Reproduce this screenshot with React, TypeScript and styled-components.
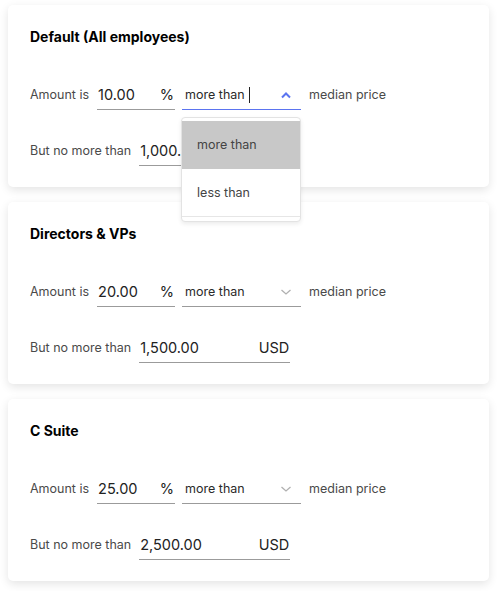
import React from 'react';
import styled, { createGlobalStyle } from 'styled-components';

const GlobalStyle = createGlobalStyle`
    body {
        margin : 0;
        background : #FFFFFF;
        font-family : Inter, "Noto Sans", sans-serif;
    }
`

const Page = styled.div`
    display : flex;
    flex-direction : column;
    gap : 15px;
    padding : 5px 9px 10px 8px;
`

const Card = styled.div`
    position : relative;
    background : #FFFFFF;
    border-radius : 5px;
    box-shadow : 0 3px 10px rgba(0, 0, 0, 0.11);
    padding : 23px 22px 21px 22px;
    display : flex;
    flex-direction : column;
`

const Title = styled.div`
    font-size : 14px;
    font-weight : 700;
    line-height : 17px;
    color : #000000;
    margin-bottom : 37px;
`

const Row = styled.div<{ $gap?: number }>`
    display : flex;
    align-items : flex-end;
    height : 28px;
    margin-bottom : ${(p) => p.$gap ?? 0}px;
`

const Label = styled.span<{ $space: number }>`
    font-size : 12.5px;
    color : #4a4a4a;
    margin-right : ${(p) => p.$space}px;
    height : 20px;
    margin-bottom : 6px;
    display : flex;
    align-items : center;
`

const Field = styled.div<{ $width: number; $active?: boolean }>`
    position : relative;
    width : ${(p) => p.$width}px;
    height : 28px;
    box-sizing : border-box;
    border-bottom : 1px solid ${(p) => (p.$active ? '#5b74f0' : '#9b9b9b')};
    display : flex;
    align-items : center;
    justify-content : space-between;
    padding : 0 1px 2px 1px;
    margin-right : 7px;
`

const Value = styled.span`
    font-size : 14.5px;
    color : #222222;
    white-space : nowrap;
`

const Unit = styled.span`
    font-size : 14.5px;
    color : #222222;
`

const SelectText = styled.span`
    font-size : 12.5px;
    color : #2a2a2a;
    padding-left : 2px;
    display : flex;
    align-items : center;
`

const Caret = styled.span`
    display : inline-block;
    width : 1px;
    height : 16px;
    background : #222222;
    margin-left : 4px;
`

const Chevron = styled.svg`
    margin-right : 8px;
`

const Trailing = styled.span`
    font-size : 12.5px;
    color : #4a4a4a;
    margin-left : 1px;
    height : 20px;
    margin-bottom : 6px;
    display : flex;
    align-items : center;
`

const Menu = styled.div`
    position : absolute;
    top : 35px;
    left : -1px;
    width : 120px;
    box-sizing : border-box;
    background : #FFFFFF;
    border : 1px solid #e3e3e3;
    border-radius : 4px;
    box-shadow : 0 2px 4px rgba(0, 0, 0, 0.08);
    padding : 3px 0 4px 0;
    z-index : 10;
`

const MenuItem = styled.div<{ $selected?: boolean }>`
    height : 48px;
    box-sizing : border-box;
    display : flex;
    align-items : center;
    padding-left : 15px;
    font-size : 12.5px;
    color : #444444;
    background : ${(p) => (p.$selected ? '#c8c8c8' : '#FFFFFF')};
    border-bottom : 1px solid ${(p) => (p.$selected ? '#c8c8c8' : '#e6e6e6')};
`

const tiers = [
    { name: 'Default (All employees)', pct: '10.00', cap: '1,000.00', open: true },
    { name: 'Directors & VPs', pct: '20.00', cap: '1,500.00', open: false },
    { name: 'C Suite', pct: '25.00', cap: '2,500.00', open: false },
]

const App = () => {
    return (
        <Page>
            <GlobalStyle />
            {tiers.map((t, index) => (
                <Card key={index} style={{ zIndex: t.open ? 2 : 1 }}>
                    <Title>{t.name}</Title>
                    <Row $gap={28}>
                        <Label $space={8}>Amount is</Label>
                        <Field $width={78}>
                            <Value>{t.pct}</Value>
                            <Unit>%</Unit>
                        </Field>
                        <Field $width={119} $active={t.open}>
                            <SelectText>
                                more than
                                {t.open && <Caret />}
                            </SelectText>
                            {t.open ? (
                                <Chevron width="12" height="8" viewBox="0 0 12 8">
                                    <polyline points="2,6.5 6,2.5 10,6.5" fill="none" stroke="#5b74f0" strokeWidth="2" />
                                </Chevron>
                            ) : (
                                <Chevron width="12" height="8" viewBox="0 0 12 8">
                                    <polyline points="1.5,2 6,6 10.5,2" fill="none" stroke="#b0b0b0" strokeWidth="1.3" />
                                </Chevron>
                            )}
                            {t.open && (
                                <Menu>
                                    <MenuItem $selected>more than</MenuItem>
                                    <MenuItem>less than</MenuItem>
                                </Menu>
                            )}
                        </Field>
                        <Trailing>median price</Trailing>
                    </Row>
                    <Row>
                        <Label $space={8}>But no more than</Label>
                        <Field $width={151}>
                            <Value>{t.cap}</Value>
                            <Unit>USD</Unit>
                        </Field>
                    </Row>
                </Card>
            ))}
        </Page>
    )
}

export default App;
